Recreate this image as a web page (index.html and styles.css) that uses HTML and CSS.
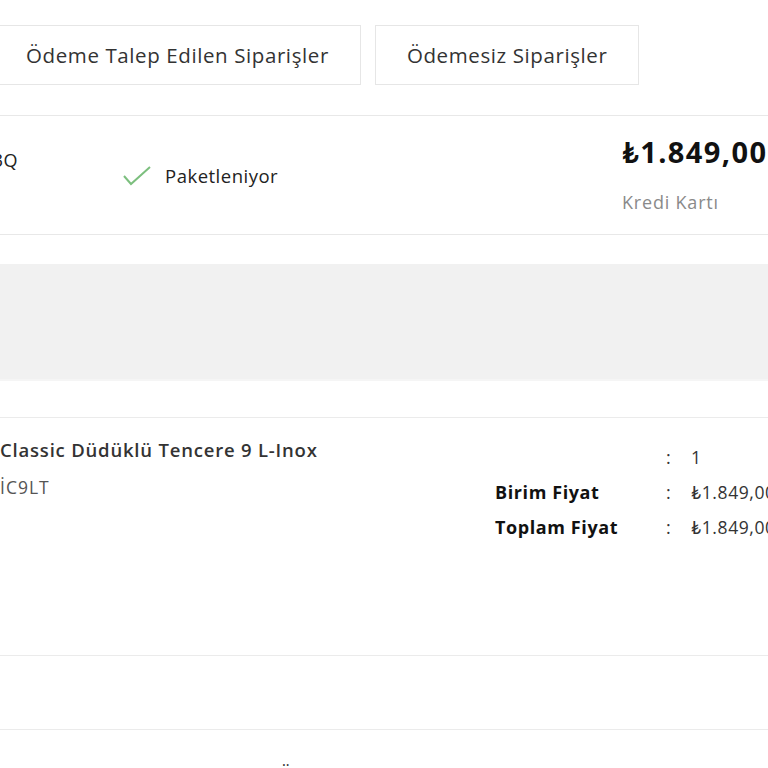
FILE: index.html
```html
<!DOCTYPE html>
<html lang="tr">
<head>
<meta charset="utf-8">
<title>Siparişlerim</title>
<link rel="stylesheet" href="styles.css">
</head>
<body>
<div class="page">
  <div class="tabs">
    <div class="tab tab-first">Ödeme Talep Edilen Siparişler</div>
    <div class="tab">Ödemesiz Siparişler</div>
  </div>

  <div class="order-row">
    <div class="order-no">SP20240AB3Q</div>
    <div class="order-status">
      <svg class="check" width="28" height="20" viewBox="0 0 28 20"><polyline points="1,10 8,18 27,1" fill="none" stroke="#7cbf7e" stroke-width="2"/></svg>
      <span>Paketleniyor</span>
    </div>
    <div class="order-price">
      <div class="price">₺1.849,00</div>
      <div class="pay">Kredi Kartı</div>
    </div>
  </div>

  <div class="gray-block"></div>

  <div class="product-row">
    <div class="product-info">
      <div class="product-name">Classic Düdüklü Tencere 9 L-Inox</div>
      <div class="product-code">İC9LT</div>
    </div>
    <div class="details">
      <div class="d-label"></div><div class="d-colon">:</div><div class="d-val">1</div>
      <div class="d-label">Birim Fiyat</div><div class="d-colon">:</div><div class="d-val">₺1.849,00</div>
      <div class="d-label">Toplam Fiyat</div><div class="d-colon">:</div><div class="d-val">₺1.849,00</div>
    </div>
  </div>

  <div class="empty-row"></div>

  <div class="bottom-text">Ödeme Bilgileri</div>
</div>
</body>
</html>
```

FILE: styles.css
```css
html, body {
  margin: 0;
  padding: 0;
  background: #ffffff;
  overflow: hidden;
}
body {
  font-family: "Open Sans", "Lato", sans-serif;
  color: #333333;
  width: 768px;
  height: 768px;
}
.page {
  padding-top: 25px;
}
.tabs {
  display: flex;
  gap: 14px;
  margin-left: -6px;
}
.tab {
  height: 58px;
  border: 1px solid #e6e6e6;
  padding: 0 31px;
  display: flex;
  align-items: center;
  font-size: 20.5px;
  letter-spacing: 0.6px;
  color: #333;
  white-space: nowrap;
}
.order-row {
  margin-top: 30px;
  height: 118px;
  border-top: 1px solid #e8e8e8;
  border-bottom: 1px solid #e8e8e8;
  display: flex;
  align-items: flex-start;
}
.order-no {
  width: 138px;
  flex-shrink: 0;
  margin-left: -120px;
  text-align: right;
  font-size: 18px;
  letter-spacing: 0.5px;
  line-height: 24px;
  margin-top: 32px;
  color: #222;
  white-space: nowrap;
}
.order-status {
  margin-left: 105px;
  margin-top: 48px;
  display: flex;
  align-items: center;
  gap: 14px;
  font-size: 18.5px;
  letter-spacing: 0.5px;
  line-height: 24px;
  color: #222;
}
.check {
  display: block;
}
.order-price {
  margin-left: auto;
  width: 146px;
  flex-shrink: 0;
  padding-top: 18px;
  white-space: nowrap;
}
.price {
  font-size: 29px;
  letter-spacing: 1.4px;
  line-height: 36px;
  font-weight: 700;
  color: #111;
}
.pay {
  margin-top: 20px;
  font-size: 18px;
  letter-spacing: 0.8px;
  line-height: 24px;
  color: #8a8a8a;
}
.gray-block {
  margin-top: 29px;
  height: 115px;
  background: #f1f1f1;
  border-bottom: 2px solid #f5f5f5;
}
.product-row {
  margin-top: 36px;
  height: 237px;
  border-top: 1px solid #ebebeb;
  border-bottom: 1px solid #ebebeb;
  display: flex;
  align-items: flex-start;
}
.product-info {
  width: 495px;
  flex-shrink: 0;
  padding-top: 19px;
}
.product-name {
  font-size: 18.5px;
  letter-spacing: 0.8px;
  line-height: 26px;
  font-weight: 600;
  color: #333;
  white-space: nowrap;
}
.product-code {
  margin-top: 12px;
  font-size: 17.5px;
  letter-spacing: 1px;
  line-height: 24px;
  color: #555;
}
.details {
  flex-shrink: 0;
  padding-top: 21px;
  display: grid;
  grid-template-columns: 171px 25px auto;
  grid-auto-rows: 35px;
  align-items: center;
  white-space: nowrap;
}
.d-label {
  font-size: 18px;
  letter-spacing: 0.6px;
  font-weight: 700;
  color: #111;
}
.d-colon {
  font-size: 18px;
  color: #333;
}
.d-val {
  font-size: 17.5px;
  letter-spacing: 0.6px;
  color: #333;
}
.empty-row {
  height: 73px;
  border-bottom: 1px solid #ebebeb;
}
.bottom-text {
  margin-top: 34px;
  margin-left: 278px;
  font-size: 20px;
  line-height: 24px;
  color: #333;
}
```
